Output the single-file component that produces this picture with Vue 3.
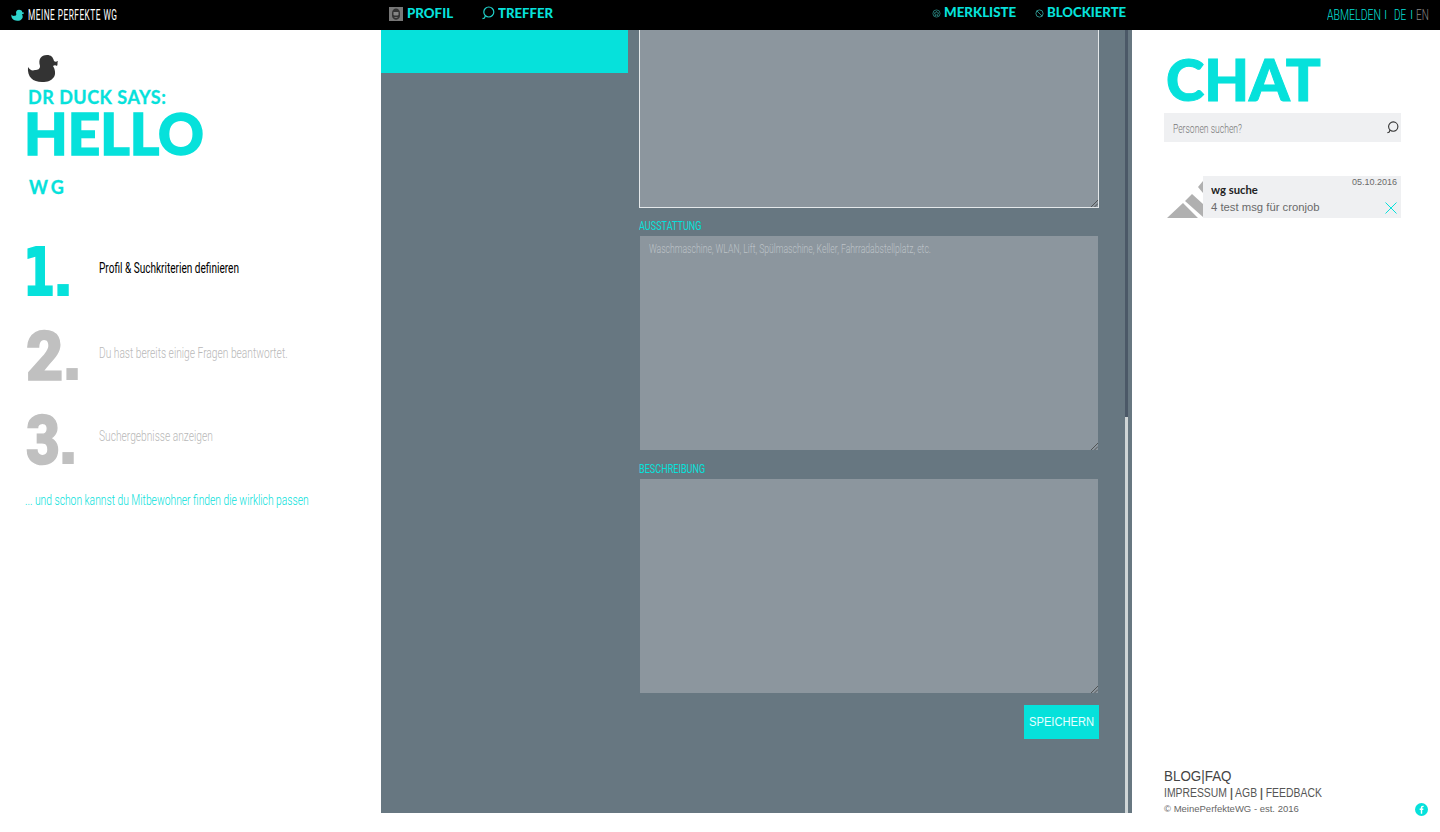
<script setup>
const steps = [
  { id: 1, text: 'Profil & Suchkriterien definieren' },
  { id: 2, text: 'Du hast bereits einige Fragen beantwortet.' },
  { id: 3, text: 'Suchergebnisse anzeigen' },
]
</script>

<template>
  <div class="page">
    <header class="topbar">
      <div class="brand">
        <svg class="brand-duck" viewBox="0 0 32 28"><path d="M13 12C11 5 14 1 20 1c4 0 7 2 8 6 1 1 2 1 4 0-1 2-1 3-1 5-1-1-3-1-4 0 2 3 3 8 0 11-3 4-6 5-12 5C6 28 0 23 1 13c2 3 4 4 7 3 3 0 5-1 5-4z" /></svg>
        <span class="t brand-name">MEINE PERFEKTE WG</span>
      </div>
      <nav class="nav">
        <svg class="avatar" viewBox="0 0 14 14"><path d="M0 0h14v14H0z" fill="#777" /><path d="M3 6c0-6 8-6 8 0v3c-1 5-7 5-8 0z" fill="#333" /><path d="M4.500 5h5v3l-1 .5h-3l-1-.5zM5.500 10h3v.8h-3z" fill="#858585" /></svg>
        <span class="t profil">PROFIL</span>
        <svg class="lens" viewBox="0 0 14 14"><circle cx="7.800" cy="6" r="5" /><path d="M4.400 9.600 3.500 12l-2 .6" /></svg>
        <span class="t treffer">TREFFER</span>
        <svg class="mini star" viewBox="0 0 10 10"><circle cx="5" cy="5" r="4" /><path d="m5 2.500.8 1.700 1.800.2-1.300 1.300.3 1.800L5 6.600l-1.600.9.3-1.800-1.300-1.300 1.800-.2z" /></svg>
        <span class="t merk">MERKLISTE</span>
        <svg class="mini block" viewBox="0 0 10 10"><circle cx="5" cy="5" r="4" /><path d="m2 2 6 6" /></svg>
        <span class="t blockierte">BLOCKIERTE</span>
      </nav>
      <div class="session">
        <span class="t abmelden">ABMELDEN</span><span class="bar first-bar">I</span><span class="t lang">DE</span><span class="bar">I</span><span class="t lang off">EN</span>
      </div>
    </header>

    <main class="columns">
      <aside class="left">
        <svg class="duck" viewBox="0 0 32 28"><path d="M13 12C11 5 14 1 20 1c4 0 6 2 7 6 1 1 2 1 4 0-1 2 0 3-1 5-1-1-3-1-4 0 2 3 3 8 1 11-3 4-6 5-12 5C6 28 0 23 1 13c2 3 4 4 7 3 3 0 5-1 5-4z" /></svg>
        <span class="t says">DR DUCK SAYS:</span>
        <h1 class="t hello">HELLO</h1>
        <span class="t wg">WG</span>
        <ol class="steps">
          <li v-for="s in steps" :key="s.id" :class="['step', 's' + s.id]">
            <span class="marker"><span class="t digit">{{ s.id }}</span><span class="dot">.</span></span>
            <span class="t label">{{ s.text }}</span>
          </li>
        </ol>
        <span class="t outro">... und schon kannst du Mitbewohner finden die wirklich passen</span>
      </aside>

      <section class="center">
        <div class="tab"></div>
        <form class="form">
          <div class="area first"><svg class="grip" viewBox="0 0 8 8"><path d="m1 8 7-7M4.500 8 8 4.500" /></svg></div>
          <span class="t cap aus">AUSSTATTUNG</span>
          <div class="area"><span class="t hint">Waschmaschine, WLAN, Lift, Spülmaschine, Keller, Fahrradabstellplatz, etc.</span><svg class="grip" viewBox="0 0 8 8"><path d="m1 8 7-7M4.500 8 8 4.500" /></svg></div>
          <span class="t cap bes">BESCHREIBUNG</span>
          <div class="area"><svg class="grip" viewBox="0 0 8 8"><path d="m1 8 7-7M4.500 8 8 4.500" /></svg></div>
          <button type="button" class="save"><span class="t save-text">SPEICHERN</span></button>
        </form>
        <div class="scroll"><div class="thumb"></div></div>
      </section>

      <aside class="right">
        <h2 class="t chat">CHAT</h2>
        <div class="search"><span class="t find">Personen suchen?</span><svg class="lens dark" viewBox="0 0 14 14"><circle cx="7.800" cy="6" r="5" /><path d="M4.400 9.600 3.500 12l-2 .6" /></svg></div>
        <div class="item">
          <svg class="pic" viewBox="0 0 36 37"><path d="M0 37 16 22 31 37zM18 20l7-7 11 10v13zM31 6l5-6v12z" /></svg>
          <div class="body">
            <div class="row"><span class="t name">wg suche</span><span class="t date">05.10.2016</span></div>
            <div class="row second"><span class="t msg">4 test msg für cronjob</span><svg class="x" viewBox="0 0 12 12"><path d="m.5.5 11 11m0-11-11 11" /></svg></div>
          </div>
        </div>
        <footer class="foot">
          <span class="t f1">BLOG|FAQ</span>
          <span class="t f2">IMPRESSUM <b>|</b> AGB <b>|</b> FEEDBACK</span>
          <div class="last"><span class="t f3">© MeinePerfekteWG - est. 2016</span>
            <svg class="fb" viewBox="0 0 12 12"><circle cx="6" cy="6" r="6" /><path d="M6 10V4.500c0-1.200.6-1.500 2-1.400M4.300 5.800H7.700" /></svg></div>
        </footer>
      </aside>
    </main>
  </div>
</template>

<style scoped>
.page { width: 1440px; height: 832px; background: #fff; overflow: hidden; font-family: Roboto, sans-serif; font-weight: 300; color: #06e1db; }
.t { display: block; flex: none; white-space: nowrap; transform-origin: 0 50%; margin: 0; }
.topbar { display: flex; height: 30px; background: #000; }
.brand { width: 381px; display: flex; align-items: center; }
.brand-duck { width: 13px; height: 12px; margin-left: 11px; margin-right: 4px; fill: #2fd5cd; }
.brand-name { width: 89px; font-size: 14px; font-weight: 400; color: #fff; letter-spacing: .8px; transform: scaleX(.594); }
.nav { width: 751px; display: flex; height: 26px; align-items: center; font: 900 14px/26px Lato, sans-serif; }
.avatar { width: 14px; height: 14px; margin: 1px 4px 0 8px; }
.profil { width: 46px; transform: scaleX(.95); }
.treffer { width: 55px; transform: scaleX(.94); }
.merk { width: 72px; transform: scaleX(.95); }
.blockierte { width: 79px; transform: scaleX(.94); }
.merk, .blockierte { line-height: 24px; height: 26px; }
.lens { width: 14px; height: 14px; margin: 0 3px 0 28px; fill: none; stroke: #20cfc8; stroke-width: 1.2; }
.mini { width: 9px; height: 9px; fill: none; stroke: #2b8a84; stroke-width: .9; }
.star { margin: 0 3px 0 379px; }
.block { margin: 0 3px 0 19px; stroke: #35aaa3; }
.session { display: flex; align-items: center; padding-left: 195px; font-size: 14.5px; }
.abmelden { width: 54px; transform: scaleX(.725); }
.lang { width: 13px; transform: scaleX(.69); }
.bar { width: 6px; margin-left: 3px; font-size: 12px; }
.first-bar { width: 10px; }
.off { color: #888; }
.columns { display: flex; height: 802px; }
.left { width: 381px; padding-left: 27px; box-sizing: border-box; }
.duck { display: block; width: 32px; height: 28px; margin-top: 24px; fill: #333; }
.says { width: 137px; font: 700 18px/30px Lato, sans-serif; letter-spacing: .5px; margin-left: 1px; -webkit-text-stroke: .3px #06e1db; }
.hello { width: 176px; font: 900 58px/44px Lato, sans-serif; margin: -1px 0 0 -3px; transform: scaleX(.975); -webkit-text-stroke: 1.5px #06e1db; }
.wg { width: 36px; font: 700 18px/20px Lato, sans-serif; letter-spacing: 3px; margin: 22px 0 0 2px; -webkit-text-stroke: .3px #06e1db; }
.steps { list-style: none; margin: 51px 0 0; padding: 0; }
.step { display: flex; height: 84px; font-size: 14.5px; color: #b8b8b8; }
.marker { display: flex; width: 72px; flex: none; color: #c0c0c0; }
.digit { font: 900 68px/50px Roboto, sans-serif; -webkit-text-stroke: 1.5px currentColor; margin-left: -1px; }
.s1 .digit { font: 700 66px/50px "DejaVu Sans"; width: 29px; margin-left: -4px; transform: scaleX(.7); -webkit-text-stroke-width: 2px; }
.s2 .digit { width: 35px; transform: scaleX(.95); }
.s3 .digit { width: 31px; transform: scaleX(.86); }
.s1 .marker { color: #06e1db; }
.s1 .label { color: #000; font-weight: 400; transform: scaleX(.694); }
.dot { font: 700 80px/41px "Liberation Sans"; }
.label { line-height: 44px; transform: scaleX(.704); }
.s1 .label, .s3 .label { line-height: 42px; }
.outro { width: 284px; font-size: 14.5px; line-height: 20px; margin: -9px 0 0 -2px; transform: scaleX(.71); }
.center { width: 751px; height: 783px; display: flex; background: #677781; }
.tab { width: 247px; height: 43px; background: #06e1db; }
.form { width: 460px; margin-left: 11px; }
.area { position: relative; box-sizing: border-box; height: 214px; margin: 0 1px; background: #8c969e; padding: 4px 9px; }
.first { height: 178px; margin: 0; border: 1px solid #e4e8ea; border-top: 0; }
.grip { position: absolute; right: 0; bottom: 0; width: 8px; height: 8px; stroke: #444; fill: none; stroke-width: .8; }
.cap { font-size: 13px; font-weight: 400; line-height: 35px; }
.aus { width: 63px; height: 28px; transform: scaleX(.7); }
.bes { width: 67px; height: 29px; line-height: 37px; transform: scaleX(.7); }
.hint { width: 282px; font-size: 12px; line-height: 18px; color: #bcc2c7; transform: scaleX(.72); }
.save { display: block; width: 75px; height: 34px; margin: 12px 0 0 385px; padding: 0 5px; border: 0; background: #06e1db; font: 12px "Liberation Sans", sans-serif; color: #e6ffff; }
.save-text { width: 65px; text-align: left; transform: scaleX(.93); }
.scroll { width: 3px; margin-left: 26px; background: #4b5867; }
.thumb { height: 396px; margin-top: 387px; background: #cfd5d6; }
.right { width: 308px; box-sizing: border-box; padding-left: 32px; color: #555; display: flex; flex-direction: column; }
.chat { width: 153px; font: 900 58px/60px Lato, sans-serif; color: #06e1db; margin: 19px 0 0 2px; -webkit-text-stroke: 1px #06e1db; }
.search { width: 237px; height: 29px; margin-top: 4px; background: #eff0f2; display: flex; align-items: center; justify-content: space-between; }
.find { width: 69px; font-size: 12px; padding: 2px 0 0 9px; color: #777; transform: translateX(2.5px) scaleX(.716); }
.dark { width: 13px; height: 13px; stroke: #333; margin: 0 2px; }
.item { display: flex; margin-top: 34px; }
.pic { width: 36px; height: 37px; margin: 5px 0 0 3px; fill: #b0b0b0; }
.body { width: 198px; height: 42px; background: #eff0f2; padding: 0 4px 0 8px; box-sizing: border-box; }
.row { display: flex; justify-content: space-between; font-family: "Liberation Sans", sans-serif; font-weight: 400; color: #6a6a6a; }
.second { margin-top: -5px; }
.name { width: 47px; height: 29px; font: 700 12px/28px Lato; color: #222; transform: scaleX(.94); }
.date { width: 45px; font-size: 9px; line-height: 13px; }
.msg { width: 106px; font-size: 11.3px; line-height: 15px; }
.x { width: 12px; height: 12px; stroke: #06e1db; margin-top: 2px; }
.foot { margin: auto 0 16px; font-family: "Liberation Sans", sans-serif; font-weight: 400; }
.f1 { width: 68px; font-size: 14px; line-height: 17px; transform: scaleX(.957); color: #444; }
.f2 { width: 158px; font-size: 12.5px; line-height: 17px; transform: scaleX(.832); }
.f3 { width: 135px; font-size: 9.5px; line-height: 14px; color: #666; }
.last { display: flex; }
.fb { width: 13px; height: 13px; fill: #06e1db; stroke: #fff; stroke-width: 1.3; margin: 1px 12px 0 auto; }
.fb circle { stroke: none; }
.fb path { fill: none; }
</style>
